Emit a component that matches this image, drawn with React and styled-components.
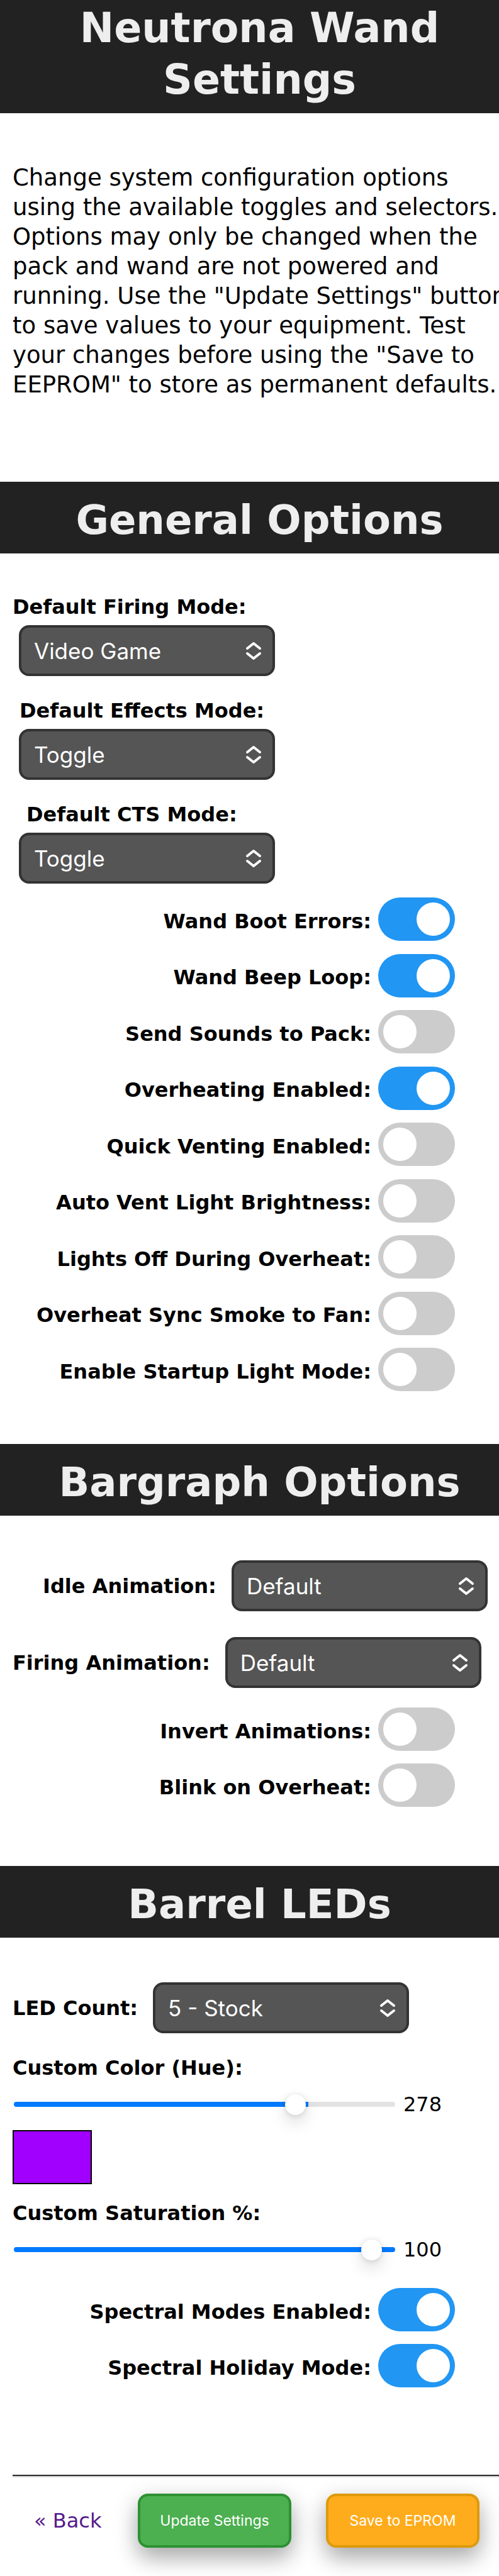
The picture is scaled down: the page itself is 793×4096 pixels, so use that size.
import React, { useState } from "react";
import styled, { createGlobalStyle } from "styled-components";

const GlobalStyle = createGlobalStyle`
  *, *::before, *::after { box-sizing: border-box; }
  body {
    margin: 0;
    background: #fff;
    color: #000;
    font-family: Verdana, "DejaVu Sans", sans-serif;
    font-size: 32px;
    line-height: 40px;
  }
`;

const Viewport = styled.div`
  overflow: hidden;
`;

const Page = styled.main`
  width: calc(100% + 32px);
  padding-bottom: 46px;
`;

const Banner = styled.h1`
  margin: 0;
  padding: ${(p) => (p.$first ? "4px 20px 12px" : "20px 20px 12px")};
  background: #222;
  color: #eee;
  font-size: ${(p) => (p.$first ? "65px" : "64px")};
  line-height: 82px;
  font-weight: bold;
  text-align: center;
`;

const Intro = styled.p`
  margin: 0;
  padding: 79px 14px 131px 20px;
  font-size: 37px;
  line-height: 47px;
`;

const Section = styled.section`
  padding: ${(p) => p.$pad};
`;

const FieldRow = styled.div`
  display: flex;
  flex-direction: ${(p) => (p.$stacked ? "column" : "row")};
  align-items: ${(p) => (p.$stacked ? "flex-start" : "center")};
  gap: ${(p) => (p.$stacked ? "9px" : "14px")};
  margin-bottom: ${(p) => p.$after || 0}px;
`;

const FieldLabel = styled.label`
  display: block;
  padding-left: ${(p) => p.$indent || 0}px;
  font-weight: bold;
  white-space: nowrap;
`;

const SelectBox = styled.div`
  position: relative;
  width: 407px;
  margin-left: 10px;
  svg {
    position: absolute;
    top: 26px;
    right: 20px;
    width: 28px;
    height: 30px;
    pointer-events: none;
  }
`;

const Select = styled.select`
  appearance: none;
  display: block;
  width: 100%;
  height: 81px;
  padding: 0 60px 0 20px;
  border: 4px solid #333;
  border-radius: 16px;
  background: #555;
  color: #fff;
  font-family: Inter, sans-serif;
  font-size: 35px;
`;

const ToggleList = styled.div`
  display: grid;
  row-gap: 20px;
  align-content: space-between;
  min-height: ${(p) => p.$min || 0}px;
`;

const ToggleRow = styled.label`
  display: grid;
  grid-template-columns: 570px 122px;
  column-gap: 11px;
  align-items: center;
  font-weight: bold;
  text-align: right;
  white-space: nowrap;
`;

const ToggleText = styled.span`
  padding-top: 6px;
`;

const Switch = styled.input`
  appearance: none;
  display: block;
  width: 122px;
  height: 69px;
  margin: 0;
  padding: 8px;
  border-radius: 35px;
  background: #ccc;
  &::before {
    content: "";
    display: block;
    width: 53px;
    height: 53px;
    border-radius: 50%;
    background: #fff;
  }
  &:checked { background: #2196f3; }
  &:checked::before { margin-left: auto; }
`;

const SliderRow = styled.div`
  display: flex;
  align-items: center;
  gap: 13px;
  height: 40px;
  margin-top: 18px;
  padding-left: 2px;
`;

const Slider = styled.input`
  appearance: none;
  width: 606px;
  height: 8px;
  margin: 0;
  padding: 0 21px;
  border-radius: 4px;
  background: linear-gradient(to right, #007aff ${(p) => p.$fill}%, #e3e3e5 ${(p) => p.$fill}%);
  &::-webkit-slider-runnable-track { height: 8px; }
  &::-webkit-slider-thumb {
    appearance: none;
    width: 33px;
    height: 33px;
    margin-top: -12px;
    border-radius: 50%;
    background: #fff;
    box-shadow: 0 12px 26px rgba(0, 0, 0, 0.14), 0 1px 8px rgba(0, 0, 0, 0.14);
  }
`;

const Swatch = styled.div`
  width: 126px;
  height: 86px;
  margin: 21px 0 26px;
  border: 2px solid #000;
  background: #a100ff;
`;

const Rule = styled.hr`
  margin: 0 0 26px 20px;
  border: 0;
  border-top: 2px solid #2a2d2b;
  border-bottom: 2px solid #d3d3d3;
`;

const Actions = styled.nav`
  display: flex;
  align-items: center;
  padding-left: 54px;
`;

const BackLink = styled.a`
  width: 165px;
  color: #551a8b;
  text-decoration: none;
`;

const Button = styled.button`
  width: 244px;
  height: 86px;
  margin-right: 55px;
  padding: 0;
  border: 4px solid ${(p) => p.$edge};
  border-radius: 16px;
  background: ${(p) => p.$fill};
  color: #fff;
  font-family: Inter, sans-serif;
  font-size: 23px;
  box-shadow: 0 16px 32px rgba(0, 0, 0, 0.2), 0 12px 40px rgba(0, 0, 0, 0.19);
`;

function SelectField({ id, label, options, stacked, indent, after }) {
  return (
    <FieldRow $stacked={stacked} $after={after}>
      <FieldLabel htmlFor={id} $indent={indent}>{label}</FieldLabel>
      <SelectBox>
        <Select id={id}>
          {options.map((o) => <option key={o}>{o}</option>)}
        </Select>
        <svg viewBox="0 0 28 30" fill="none" stroke="#fff" strokeWidth="4" strokeLinecap="round" strokeLinejoin="round">
          <path d="M4 11 14 3l10 8M4 19l10 8 10-8" />
        </svg>
      </SelectBox>
    </FieldRow>
  );
}

function Toggles({ items, min }) {
  return (
    <ToggleList $min={min}>
      {items.map(([label, on]) => (
        <ToggleRow key={label}>
          <ToggleText>{label}</ToggleText>
          <Switch type="checkbox" role="switch" defaultChecked={on} />
        </ToggleRow>
      ))}
    </ToggleList>
  );
}

function SliderField({ id, label, max, value, onChange }) {
  return (
    <>
      <FieldLabel htmlFor={id}>{label}</FieldLabel>
      <SliderRow>
        <Slider
          id={id}
          type="range"
          min="0"
          max={max}
          value={value}
          $fill={(value / max) * 100}
          onChange={(e) => onChange(Number(e.target.value))}
        />
        <output htmlFor={id}>{value}</output>
      </SliderRow>
    </>
  );
}

const generalToggles = [
  ["Wand Boot Errors:", true],
  ["Wand Beep Loop:", true],
  ["Send Sounds to Pack:", false],
  ["Overheating Enabled:", true],
  ["Quick Venting Enabled:", false],
  ["Auto Vent Light Brightness:", false],
  ["Lights Off During Overheat:", false],
  ["Overheat Sync Smoke to Fan:", false],
  ["Enable Startup Light Mode:", false],
];

export default function App() {
  const [hue, setHue] = useState(278);
  const [saturation, setSaturation] = useState(100);
  return (
    <Viewport>
      <GlobalStyle />
      <Page>
        <Banner $first>Neutrona Wand Settings</Banner>
        <Intro>
          Change system configuration options using the available toggles and selectors. Options may
          only be changed when the pack and wand are not powered and running. Use the "Update
          Settings" button to save values to your equipment. Test your changes before using the
          "Save to EEPROM" to store as permanent defaults.
        </Intro>

        <Banner as="h2">General Options</Banner>
        <Section $pad="65px 20px 84px">
          <SelectField id="firing" label="Default Firing Mode:" options={["Video Game"]} stacked after={35} />
          <SelectField id="effects" label="Default Effects Mode:" options={["Toggle"]} stacked indent={11} after={35} />
          <SelectField id="cts" label="Default CTS Mode:" options={["Toggle"]} stacked indent={22} after={22} />
          <Toggles items={generalToggles} min={785} />
        </Section>

        <Banner as="h2">Bargraph Options</Banner>
        <Section $pad="71px 20px 94px">
          <SelectField id="idle" label="Idle Animation:" options={["Default"]} indent={48} after={41} />
          <SelectField id="firing-animation" label="Firing Animation:" options={["Default"]} after={31} />
          <Toggles items={[["Invert Animations:", false], ["Blink on Overheat:", false]]} />
        </Section>

        <Banner as="h2">Barrel LEDs</Banner>
        <Section $pad="71px 20px 139px">
          <SelectField id="led-count" label="LED Count:" options={["5 - Stock"]} after={35} />
          <SliderField id="hue" label="Custom Color (Hue):" max={360} value={hue} onChange={setHue} />
          <Swatch />
          <SliderField id="saturation" label="Custom Saturation %:" max={100} value={saturation} onChange={setSaturation} />
          <Section $pad="41px 0 0">
            <Toggles items={[["Spectral Modes Enabled:", true], ["Spectral Holiday Mode:", true]]} />
          </Section>
        </Section>

        <Rule />
        <Actions>
          <BackLink href="#">« Back</BackLink>
          <Button type="button" $fill="#4caf50" $edge="#2d9132">Update Settings</Button>
          <Button type="button" $fill="#ffac1c" $edge="#dd9a0e">Save to EPROM</Button>
        </Actions>
      </Page>
    </Viewport>
  );
}
